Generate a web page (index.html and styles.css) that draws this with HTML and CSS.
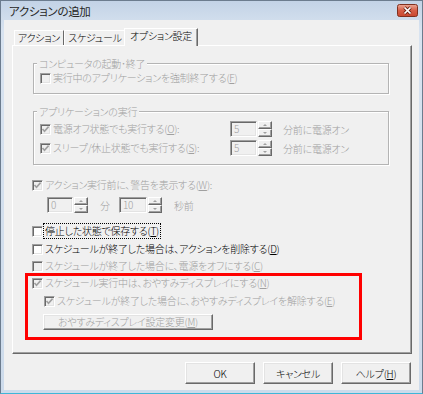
FILE: index.html
```html
<!DOCTYPE html>
<html lang="ja">
<head>
<meta charset="utf-8">
<title>アクションの追加</title>
<link rel="stylesheet" href="styles.css">
</head>
<body>
<div class="window">
  <div class="titlebar">
    <span class="title">アクションの追加</span>
    <span class="close">
      <svg width="21" height="13" viewBox="0 0 21 13">
        <defs><linearGradient id="cg" x1="0" y1="0" x2="0" y2="1"><stop offset="0" stop-color="#eba896"/><stop offset="0.5" stop-color="#d65e47"/><stop offset="1" stop-color="#c9472f"/></linearGradient></defs>
        <rect x="0.5" y="0.5" width="20" height="12" rx="2" fill="url(#cg)" stroke="#80301f"/>
        <path d="M7.5 3.5 L13.5 9.5 M13.5 3.5 L7.5 9.5" stroke="#6a2214" stroke-width="3.2"/>
        <path d="M7.5 3.5 L13.5 9.5 M13.5 3.5 L7.5 9.5" stroke="#fff" stroke-width="1.7"/>
      </svg>
    </span>
  </div>
  <div class="client">
    <div class="tabs">
      <div class="tab t1">アクション</div>
      <div class="tab t2">スケジュール</div>
      <div class="tab sel">オプション設定</div>
    </div>
    <div class="panel">
      <div class="group g1">
        <div class="legend">コンピュータの起動･終了</div>
        <div class="row dis r-g1"><span class="cb"></span><span class="txt">実行中のアプリケーションを強制終了する(<u>F</u>)</span></div>
      </div>
      <div class="group g2">
        <div class="legend">アプリケーションの実行</div>
        <div class="row dis r-g2a">
          <span class="lab"><span class="cb"><svg width="9" height="9" viewBox="0 0 9 9"><path d="M1.5 4 L3.5 6.3 L7.6 1.6" fill="none" stroke="#a0a0a0" stroke-width="1.6"/></svg></span><span class="txt">電源オフ状態でも実行する(<u>O</u>):</span></span>
          <span class="spin"><span class="edit w27">5</span><span class="arrows"><span class="ab"><i class="up"></i></span><span class="ab"><i class="dn"></i></span></span></span>
          <span class="after">分前に電源オン</span>
        </div>
        <div class="row dis r-g2b">
          <span class="lab"><span class="cb"><svg width="9" height="9" viewBox="0 0 9 9"><path d="M1.5 4 L3.5 6.3 L7.6 1.6" fill="none" stroke="#a0a0a0" stroke-width="1.6"/></svg></span><span class="txt">スリープ/休止状態でも実行する(<u>S</u>):</span></span>
          <span class="spin"><span class="edit w27">5</span><span class="arrows"><span class="ab"><i class="up"></i></span><span class="ab"><i class="dn"></i></span></span></span>
          <span class="after">分前に電源オン</span>
        </div>
      </div>
      <div class="row dis r-warn"><span class="cb"><svg width="9" height="9" viewBox="0 0 9 9"><path d="M1.5 4 L3.5 6.3 L7.6 1.6" fill="none" stroke="#a0a0a0" stroke-width="1.6"/></svg></span><span class="txt">アクション実行前に、警告を表示する(<u>W</u>):</span></div>
      <div class="row dis r-time">
        <span class="spin"><span class="edit w26">0</span><span class="arrows"><span class="ab"><i class="up"></i></span><span class="ab"><i class="dn"></i></span></span></span>
        <span class="unit u1">分</span>
        <span class="spin"><span class="edit w28">10</span><span class="arrows"><span class="ab"><i class="up"></i></span><span class="ab"><i class="dn"></i></span></span></span>
        <span class="unit u2">秒前</span>
      </div>
      <div class="row r-stop"><span class="cb"></span><span class="txt focus">停止した状態で保存する(<u>T</u>)</span></div>
      <div class="row r-del"><span class="cb"></span><span class="txt">スケジュールが終了した場合は、アクションを削除する(<u>D</u>)</span></div>
      <div class="row dis r-off"><span class="cb"></span><span class="txt">スケジュールが終了した場合に、電源をオフにする(<u>C</u>)</span></div>
      <div class="row dis r-n"><span class="cb"><svg width="9" height="9" viewBox="0 0 9 9"><path d="M1.5 4 L3.5 6.3 L7.6 1.6" fill="none" stroke="#a0a0a0" stroke-width="1.6"/></svg></span><span class="txt">スケジュール実行中は、おやすみディスプレイにする(<u>N</u>)</span></div>
      <div class="row dis r-e"><span class="cb"><svg width="9" height="9" viewBox="0 0 9 9"><path d="M1.5 4 L3.5 6.3 L7.6 1.6" fill="none" stroke="#a0a0a0" stroke-width="1.6"/></svg></span><span class="txt">スケジュールが終了した場合に、おやすみディスプレイを解除する(<u>E</u>)</span></div>
      <div class="btn dis r-m">おやすみディスプレイ設定変更(<u>M</u>)</div>
      <div class="highlight"></div>
    </div>
    <div class="buttons">
      <div class="btn">OK</div>
      <div class="btn">キャンセル</div>
      <div class="btn">ヘルプ(<u>H</u>)</div>
    </div>
  </div>
</div>
</body>
</html>
```

FILE: styles.css
```css
* { box-sizing: border-box; }
html, body { margin: 0; padding: 0; }
body {
  width: 423px;
  height: 394px;
  overflow: hidden;
  background: #fff;
  font-family: "Noto Sans CJK JP", "Noto Sans", sans-serif;
  font-size: 10px;
  font-weight: 300;
  letter-spacing: -0.25px;
  font-feature-settings: "palt";
  color: #000;
}
u { text-decoration: underline; text-underline-offset: 1px; }

.window {
  width: 423px;
  height: 394px;
  border: 1px solid #6c7c8e;
  border-bottom-color: #3fb6d8;
  background: linear-gradient(#c3d3e6, #d8e3f0 30px, #cddbeb);
  padding: 0 3px 3px 3px;
  display: flex;
  flex-direction: column;
}
.titlebar {
  height: 19px;
  display: flex;
  justify-content: space-between;
  align-items: flex-start;
  flex: none;
}
.title {
  font-size: 11.5px;
  font-weight: 400;
  letter-spacing: -0.3px;
  line-height: 21px;
  padding-left: 5px;
  color: #262626;
}
.close { margin-top: 3px; margin-right: 1px; height: 13px; display: block; }
.close svg { display: block; }

.client {
  flex: 1;
  background: #f0f0f0;
  padding-top: 8px;
  display: flex;
  flex-direction: column;
}

/* tabs */
.tabs {
  display: flex;
  align-items: flex-end;
  height: 17px;
  margin-left: 10px;
  flex: none;
}
.tab {
  height: 15px;
  line-height: 14px;
  text-align: center;
  border-top: 1px solid #fff;
  border-left: 1px solid #fff;
  border-right: 1px solid #696969;
  white-space: nowrap;
}
.t1 { width: 50px; }
.t2 { width: 62px; }
.sel {
  width: 74px;
  height: 18px;
  line-height: 14px;
  margin: 0 -2px -1px -2px;
  background: #f0f0f0;
  position: relative;
  z-index: 1;
  box-shadow: inset -1px 0 #a0a0a0;
}

/* panel */
.panel {
  position: relative;
  margin-left: 8px;
  width: 400px;
  height: 309px;
  flex: none;
  border-top: 1px solid #fff;
  border-left: 1px solid #fff;
  border-right: 1px solid #696969;
  border-bottom: 1px solid #696969;
  box-shadow: inset -1px -1px #a0a0a0;
}

.group {
  margin-left: 20px;
  width: 356px;
  border: 1px solid #b4b4b4;
  box-shadow: inset 1px 1px #fff, 1px 1px #fff;
  padding-left: 6px;
}
.legend {
  height: 11px;
  line-height: 11px;
  margin: -6px 0 0 -3px;
  padding: 0 2px;
  width: fit-content;
  background: #f0f0f0;
  color: #a0a0a0;
  white-space: nowrap;
}
.g1 { margin-top: 17px; padding-bottom: 8px; }
.g2 { margin-top: 17px; padding-bottom: 8px; }

.row {
  display: flex;
  align-items: center;
  height: 16px;
  white-space: nowrap;
}
.dis { color: #a0a0a0; }
.cb {
  width: 11px;
  height: 11px;
  flex: none;
  margin-right: 2px;
  border: 1px solid;
  border-color: #a0a0a0 #fff #fff #a0a0a0;
  box-shadow: inset 1px 1px #696969, inset -1px -1px #e3e3e3;
  background: #fff;
  display: flex;
  align-items: center;
  justify-content: center;
}
.dis .cb { background: #f0f0f0; }
.cb svg { display: block; }
.txt { line-height: 14px; }

.r-g1 { height: 14px; margin-top: 2px; }
.r-g2a { margin-top: 4px; }
.r-g2b { margin-top: 3px; }
.lab { width: 190px; display: flex; align-items: center; }
.after { margin-left: 11px; }

.spin { display: flex; height: 16px; flex: none; }
.edit {
  height: 16px;
  border: 1px solid;
  border-color: #a0a0a0 #fff #fff #a0a0a0;
  box-shadow: inset 1px 1px #696969, inset -1px -1px #e3e3e3;
  padding-left: 3px;
  line-height: 14px;
  color: #a0a0a0;
}
.w26 { width: 26px; }
.w27 { width: 27px; }
.w28 { width: 28px; }
.arrows {
  width: 14px;
  display: flex;
  flex-direction: column;
  margin-left: 1px;
}
.ab {
  flex: 1;
  border: 1px solid;
  border-color: #fff #696969 #696969 #fff;
  box-shadow: inset -1px -1px #a0a0a0;
  background: #f0f0f0;
  display: flex;
  align-items: center;
  justify-content: center;
}
.ab i { display: block; width: 0; height: 0; border-left: 2px solid transparent; border-right: 2px solid transparent; }
.ab i.up { border-bottom: 2px solid #a0a0a0; }
.ab i.dn { border-top: 2px solid #a0a0a0; }

.r-warn { margin-left: 19px; margin-top: 13px; height: 14px; }
.r-time { margin-left: 34px; margin-top: 5px; }
.u1 { margin-left: 12px; width: 19px; }
.u2 { margin-left: 12px; }
.r-stop { margin-left: 19px; margin-top: 10px; }
.focus { border: 1px dotted #000; padding: 0 1px; margin-left: -2px; }
.r-del { margin-left: 19px; margin-top: 2px; }
.r-off { margin-left: 19px; margin-top: 1px; }
.r-n { margin-left: 19px; margin-top: 1px; }
.r-e { margin-left: 31px; margin-top: 2px; }

.btn {
  display: flex;
  align-items: center;
  justify-content: center;
  border: 1px solid;
  border-color: #fff #696969 #696969 #fff;
  box-shadow: inset -1px -1px #a0a0a0, inset 1px 1px #e3e3e3;
  background: #f0f0f0;
  white-space: nowrap;
}
.r-m { margin-left: 30px; margin-top: 5px; width: 170px; height: 16px; line-height: 14px; }

.highlight {
  position: absolute;
  left: 12px;
  top: 227px;
  width: 337px;
  height: 67px;
  border: 3px solid #ff0000;
}

.buttons {
  display: flex;
  justify-content: flex-end;
  gap: 8px;
  margin-top: 8px;
  padding-right: 8px;
}
.buttons .btn { width: 70px; height: 22px; }
```
